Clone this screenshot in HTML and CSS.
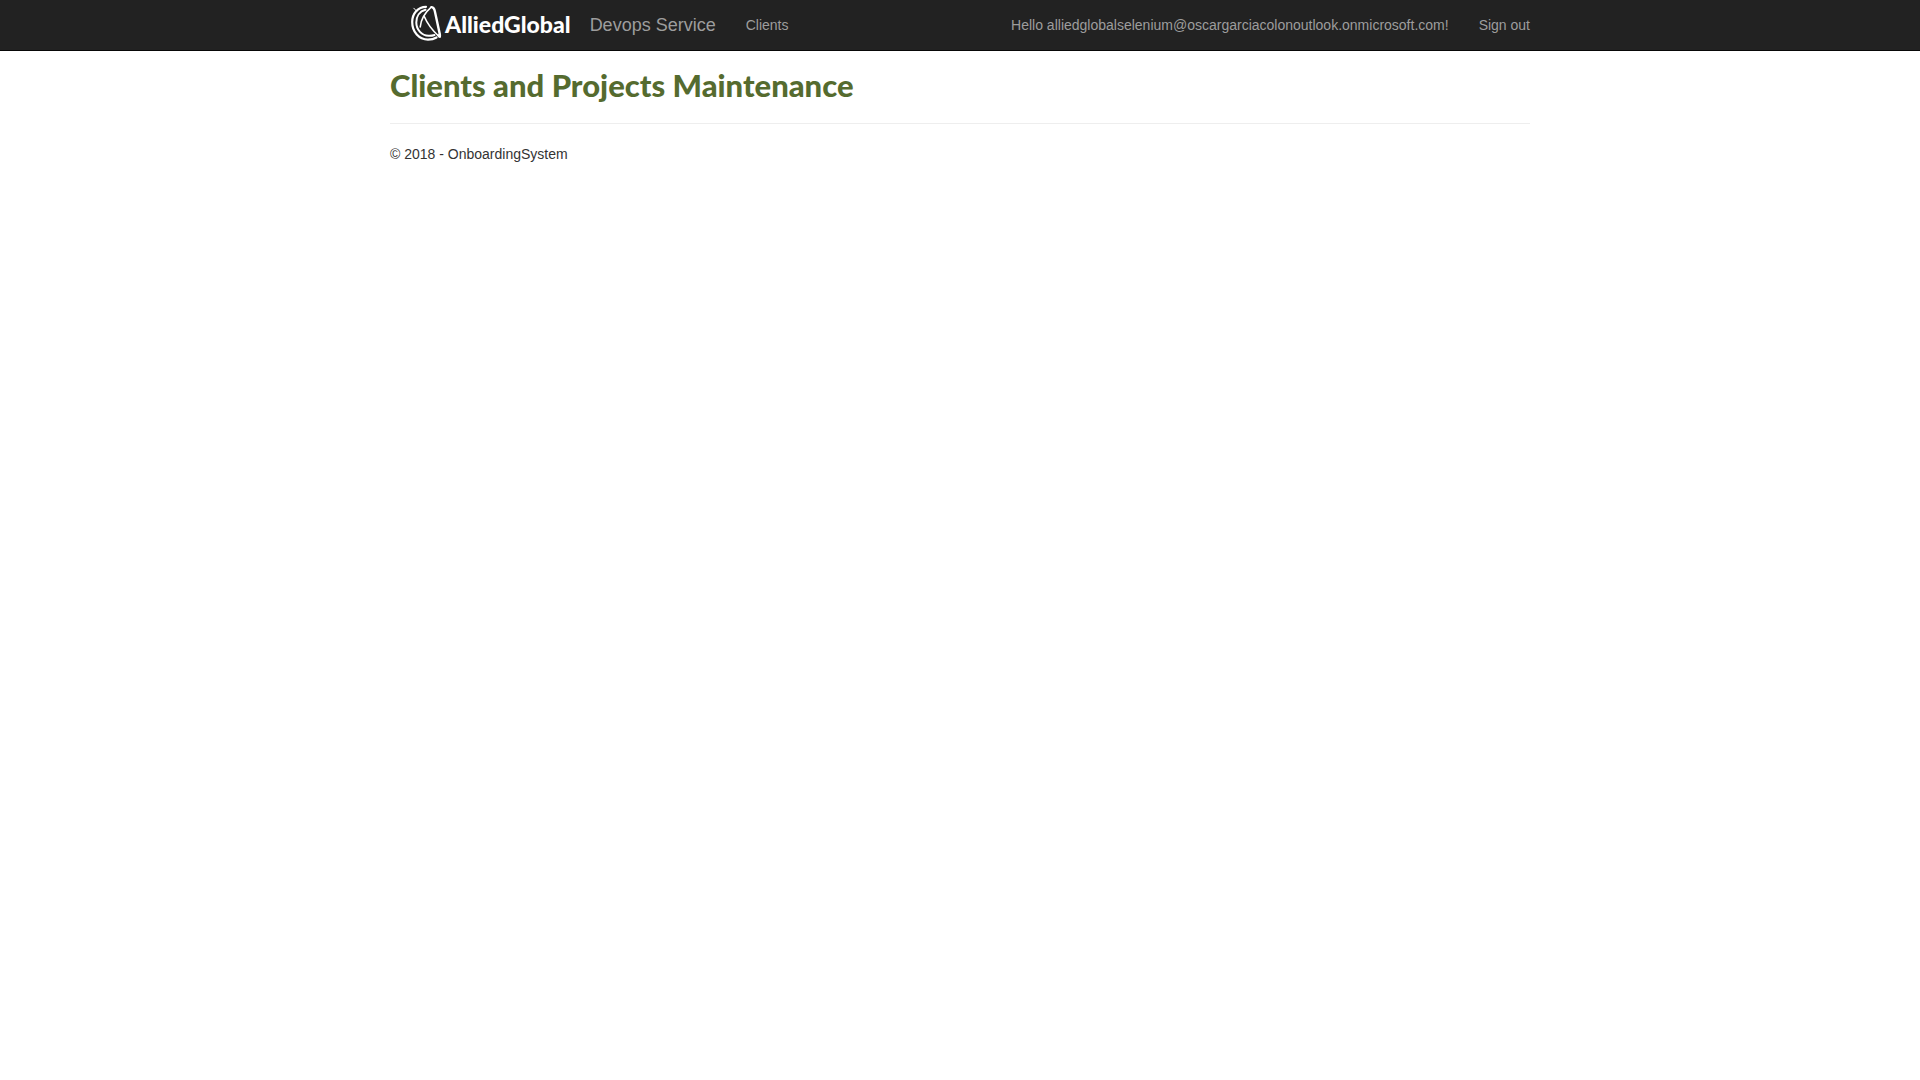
FILE: index.html
```html
<!DOCTYPE html>
<html lang="en">
<head>
<meta charset="utf-8">
<meta name="viewport" content="width=device-width, initial-scale=1">
<title>Clients and Projects Maintenance</title>
<link rel="stylesheet" href="styles.css">
</head>
<body>
<header class="navbar">
  <nav class="container navbar-inner">
    <a class="logo" href="#">
      <svg class="logo-mark" viewBox="0 0 32 38" aria-hidden="true">
        <g fill="none" stroke="#fff" stroke-linecap="round">
          <path stroke-width="2.200" d="M16 2.800C8 3 2.200 9.500 2.200 18C2.200 28 9 35.600 18 35.600C21.500 35.600 24 35 26.500 33.500"/>
          <path stroke-width="2" d="M15.500 5.800C9.500 7.300 6.300 12.500 6.300 18.500C6.300 26 12 31.600 18.500 31.800C20.500 31.900 22.500 31.700 24.500 31"/>
          <path stroke-width="1.600" d="M21.500 2.800C15.500 8 11 14 10.200 23M14.300 12.500C17 19 22 26 29 32.500"/>
          <path stroke-width="1" d="M3.800 4.200L6.500 7"/>
        </g>
        <path fill="#fff" d="M20.500 2.200C24 1.500 25.300 4 26 7L31 30C31.500 34 30.500 35 28 33L27.200 31L28.500 30L24 9C23.500 5.500 22.500 4 20.500 4Z"/>
      </svg>
      <span class="logo-text">AlliedGlobal</span>
    </a>
    <a class="brand" href="#">Devops Service</a>
    <a class="nav-link" href="#">Clients</a>
    <div class="account">
      <span class="nav-link">Hello alliedglobalselenium@oscargarciacolonoutlook.onmicrosoft.com!</span>
      <a class="nav-link" href="#">Sign out</a>
    </div>
  </nav>
</header>
<main class="container">
  <h1 class="title">Clients and Projects Maintenance</h1>
  <hr class="divider">
  <footer><p class="copyright">© 2018 - OnboardingSystem</p></footer>
</main>
</body>
</html>
```

FILE: styles.css
```css
* { box-sizing: border-box; }

body {
  margin: 0;
  background: #fff;
  color: #333;
  font: 14px/20px "Liberation Sans", Arial, sans-serif;
}

.container {
  max-width: 1170px;
  margin: 0 auto;
  padding: 0 15px;
}

.navbar {
  background: #222;
  border-bottom: 1px solid #080808;
}

.navbar-inner {
  display: flex;
  flex-wrap: wrap;
  padding: 0;
}

.navbar a { text-decoration: none; }

.logo {
  display: flex;
  padding: 4px 4px 4px 35px;
  color: #fff;
}

.logo-mark {
  width: 32px;
  height: 38px;
}

.logo-text {
  padding-left: 3px;
  font: 900 23px/40px Lato, sans-serif;
}

.brand {
  padding: 15px;
  color: #9d9d9d;
  font-size: 18px;
}

.nav-link {
  padding: 15px;
  color: #9d9d9d;
}

.account {
  display: flex;
  flex-wrap: wrap;
  margin-left: auto;
}

.title {
  margin: 16px 0 20px;
  color: #556b2f;
  font: 900 31px/36px Lato, sans-serif;
}

.divider {
  margin: 0 0 20px;
  border: 0;
  border-top: 1px solid #eee;
}

.copyright { margin: 0 0 10px; }
```
